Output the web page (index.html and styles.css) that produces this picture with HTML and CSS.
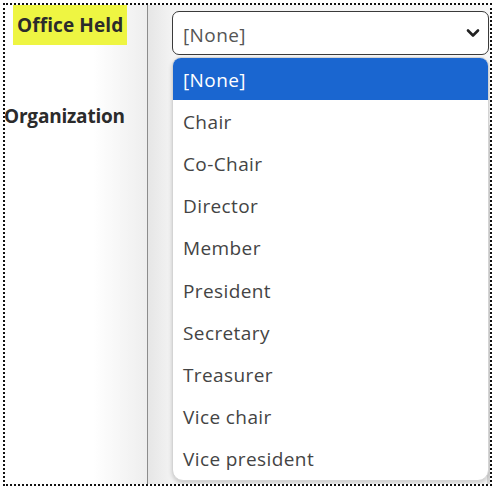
FILE: index.html
```html
<!DOCTYPE html>
<html lang="en">
<head>
<meta charset="utf-8">
<link rel="stylesheet" href="styles.css">
</head>
<body>
<div class="frame">
  <div class="labels">
    <div class="label highlight">Office Held</div>
    <div class="label org">Organization</div>
  </div>
  <div class="divider"></div>
  <div class="fields">
    <div class="select">
      <span class="select-value">[None]</span>
      <svg class="chevron" width="14" height="10" viewBox="0 0 14 10"><path d="M2 2.5 L7 7.5 L12 2.5" fill="none" stroke="#222" stroke-width="2.6" stroke-linecap="round" stroke-linejoin="round"/></svg>
    </div>
    <div class="table-edge"></div>
  </div>
  <ul class="menu">
    <li class="option selected">[None]</li>
    <li class="option">Chair</li>
    <li class="option">Co-Chair</li>
    <li class="option">Director</li>
    <li class="option">Member</li>
    <li class="option">President</li>
    <li class="option">Secretary</li>
    <li class="option">Treasurer</li>
    <li class="option">Vice chair</li>
    <li class="option">Vice president</li>
  </ul>
</div>
</body>
</html>
```

FILE: styles.css
```css
html, body {
  margin: 0;
  padding: 0;
  background: #ffffff;
}

body {
  font-family: "Open Sans", "Liberation Sans", sans-serif;
}

.frame {
  position: relative;
  margin: 3px;
  width: 485px;
  height: 479px;
  border: 2px dotted #111;
  display: flex;
  overflow: hidden;
}

.labels {
  width: 142px;
  flex: none;
  background: linear-gradient(to right, #ffffff 0%, #ffffff 62%, #eeeeee 100%);
  display: flex;
  flex-direction: column;
  overflow: hidden;
}

.label {
  font-weight: 700;
  font-size: 19px;
  color: #2b2b2b;
  letter-spacing: 0.1px;
}

.highlight {
  align-self: flex-start;
  margin-left: 8px;
  width: 110px;
  padding-left: 4px;
  height: 40px;
  line-height: 40px;
  background: #eef542;
}

.org {
  margin-top: 56px;
  margin-left: -1px;
  letter-spacing: -0.2px;
  line-height: 30px;
}

.divider {
  width: 1px;
  flex: none;
  background: #8c8c8c;
}

.fields {
  flex: 1;
  position: relative;
  background: linear-gradient(to right, #e6e6e6 0px, #f3f3f3 24px, #f6f6f6 100%);
  padding: 6px 0 0 24px;
  display: flex;
  flex-direction: column;
}

.select {
  box-sizing: border-box;
  width: 317px;
  height: 44px;
  border: 1px solid #3a3a3a;
  border-radius: 7px;
  background: #ffffff;
  display: flex;
  align-items: center;
  justify-content: space-between;
  padding: 3px 8px 0 10px;
  position: relative;
  z-index: 1;
}

.select-value {
  font-size: 19px;
  letter-spacing: 0.4px;
  color: #555555;
}

.chevron {
  display: block;
  margin-top: -3px;
}

.table-edge {
  position: absolute;
  right: 0;
  top: 120px;
  width: 3px;
  height: 360px;
  background: #d8d8d8;
}

.menu {
  position: absolute;
  left: 167px;
  top: 52px;
  width: 317px;
  height: 424px;
  margin: 0;
  padding: 0;
  list-style: none;
  background: #ffffff;
  border: 1px solid #d4d4d4;
  box-sizing: border-box;
  border-radius: 9px 9px 11px 11px;
  box-shadow: 0 2px 4px rgba(0, 0, 0, 0.18);
  overflow: hidden;
  z-index: 2;
  display: flex;
  flex-direction: column;
}

.option {
  flex: 1;
  display: flex;
  align-items: center;
  padding-left: 10px;
  padding-top: 1px;
  font-size: 19px;
  letter-spacing: 0.4px;
  color: #444444;
}

.option.selected {
  background: #1a66d0;
  color: #ffffff;
}
```
